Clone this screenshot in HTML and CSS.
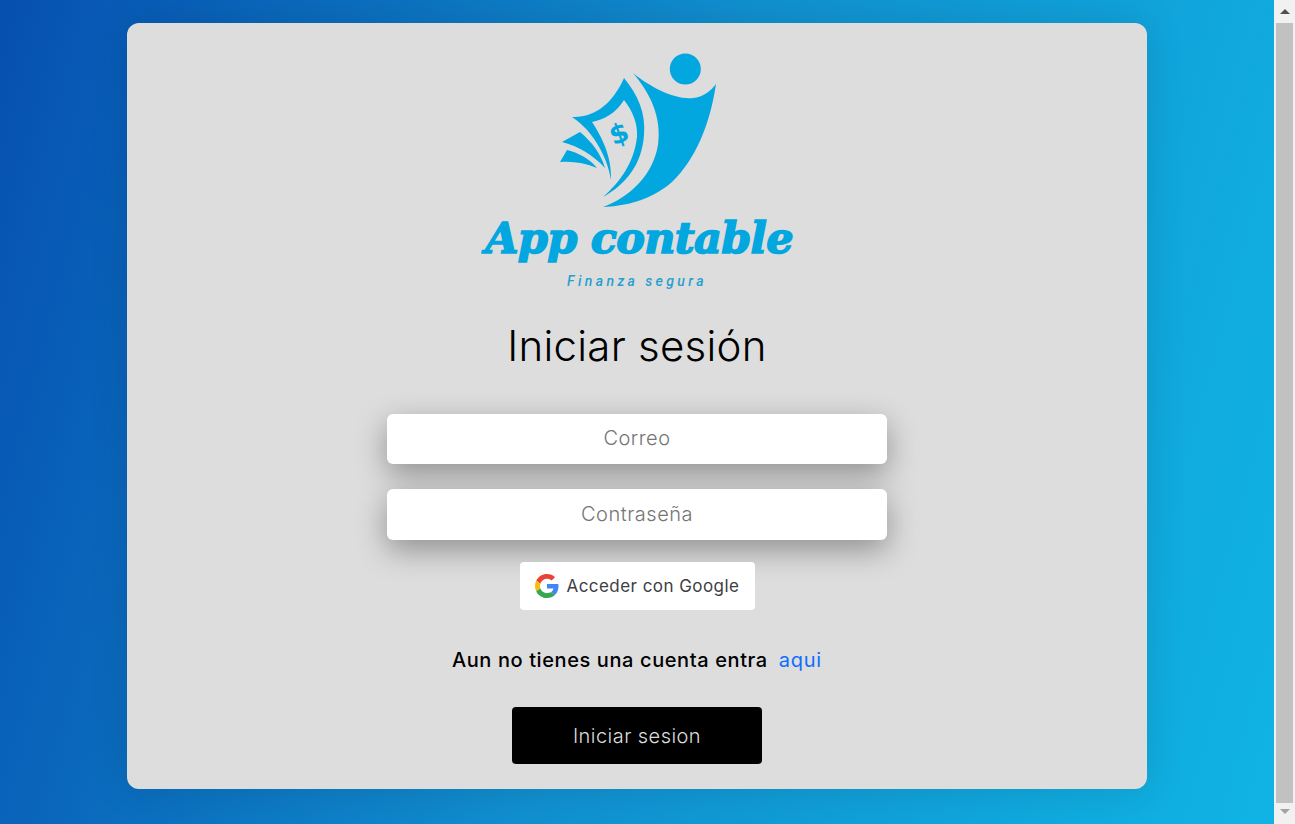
FILE: index.html
```html
<!DOCTYPE html>
<html lang="es">
<head>
    <meta charset="UTF-8">
    <meta name="viewport" content="width=device-width, initial-scale=1.0">
    <title>App contable</title>
    <link rel="stylesheet" href="styles.css">
</head>
<body>
    <div class="page">
        <main class="card">
            <!-- Logo -->
            <div class="logo">
                <svg class="logo-mark" width="180" height="170" viewBox="-3 0 180 170">
                    <circle cx="135.3" cy="24" r="15.5"/>
                    <path d="M83 28C100 42 125 55 143 53C153 52 161 46 166 39C160 80 145 115 122 137C100 156 75 161 53 162C80 152 103 130 108 100C112 72 100 48 83 28Z"/>
                    <path d="M74 33C88 50 96 68 94 90C92 120 75 140 53 152C70 137 84 118 87 92C88 78 82 65 74 55C66 68 55 74 42 77C52 92 62 112 61 135C58 115 45 87 22 72C45 73 63 58 74 33Z"/>
                    <path d="M12 97L30 87C42 97 51 109 55 123C43 110 30 102 12 97Z"/>
                    <path d="M10 117L17 105C29 108 40 114 47 123C35 118 23 116 10 117Z"/>
                    <text class="logo-dollar" x="60" y="98" transform="rotate(-20 69 90)">$</text>
                </svg>
                <div class="logo-name">App contable</div>
                <div class="logo-slogan">Finanza segura</div>
            </div>

            <h1 class="title">Iniciar sesión</h1>

            <!-- Formulario -->
            <form class="login-form">
                <input class="field" type="email" placeholder="Correo">
                <input class="field field-pass" type="password" placeholder="Contraseña">

                <button class="google-btn" type="button">
                    <svg width="24" height="24" viewBox="0 0 48 48">
                        <path fill="#EA4335" d="M24 9.5c3.54 0 6.71 1.22 9.21 3.6l6.85-6.85C35.9 2.38 30.47 0 24 0 14.62 0 6.51 5.38 2.56 13.22l7.98 6.19C12.43 13.72 17.74 9.5 24 9.5z"/>
                        <path fill="#4285F4" d="M46.98 24.55c0-1.57-.15-3.09-.38-4.55H24v9.02h12.94c-.58 2.96-2.26 5.48-4.78 7.18l7.73 6c4.51-4.18 7.09-10.36 7.09-17.65z"/>
                        <path fill="#FBBC05" d="M10.53 28.59c-.48-1.45-.76-2.99-.76-4.59s.27-3.14.76-4.59l-7.98-6.19C.92 16.46 0 20.12 0 24c0 3.88.92 7.54 2.56 10.78l7.97-6.19z"/>
                        <path fill="#34A853" d="M24 48c6.48 0 11.93-2.13 15.89-5.81l-7.73-6c-2.15 1.45-4.92 2.3-8.16 2.3-6.26 0-11.57-4.22-13.47-9.91l-7.98 6.19C6.51 42.62 14.62 48 24 48z"/>
                    </svg>
                    <span>Acceder con Google</span>
                </button>

                <p class="register">Aun no tienes una cuenta entra <a href="#">aqui</a></p>

                <button class="submit-btn" type="submit">Iniciar sesion</button>
            </form>
        </main>
    </div>

    <!-- Barra de desplazamiento -->
    <div class="scrollbar">
        <span class="arrow-up"></span>
        <div class="thumb"></div>
        <span class="arrow-down"></span>
    </div>
</body>
</html>
```

FILE: styles.css
```css
/* Global Styles */
html, body {
    margin: 0;
    height: 824px;
    overflow: hidden;
}

body {
    display: flex;
    font-family: 'Inter', 'Liberation Sans', sans-serif;
    color: #000;
}

.page {
    flex: 1;
    height: 824px;
    background: linear-gradient(105deg, #0650b0 0%, #1190d0 50%, #10b4e4 100%);
    padding-top: 23px;
    box-sizing: border-box;
}

/* Card */
.card {
    width: 1020px;
    height: 766px;
    margin-left: 127px;
    box-sizing: border-box;
    padding-top: 22px;
    background-color: #ddd;
    border-radius: 12px;
    box-shadow: 0 0 40px rgba(0, 0, 0, 0.12);
    display: flex;
    flex-direction: column;
    align-items: center;
}

/* Logo */
.logo {
    height: 236px;
    display: flex;
    flex-direction: column;
    align-items: center;
    color: #03a7df;
}

.logo-mark {
    display: block;
    fill: #03a7df;
    flex: none;
}

.logo-dollar {
    font-family: 'DejaVu Sans', sans-serif;
    font-weight: 700;
    font-size: 27px;
}

.logo-name {
    font-family: 'DejaVu Serif', serif;
    font-weight: 700;
    font-style: italic;
    font-size: 43px;
    line-height: 50px;
    margin: -2px 0 0 4px;
    white-space: nowrap;
    -webkit-text-stroke: 1.6px #03a7df;
    letter-spacing: -0.7px;
}

.logo-slogan {
    font-family: 'Roboto', sans-serif;
    font-style: italic;
    font-weight: 500;
    font-size: 14px;
    line-height: 16px;
    margin-top: 10px;
    letter-spacing: 3.4px;
    color: #2a9fcf;
}

.title {
    margin: 40px 0 0;
    font-size: 42px;
    line-height: 50px;
    font-weight: 300;
    letter-spacing: 0.25px;
}

/* Form */
.login-form {
    margin-top: 43px;
    display: flex;
    flex-direction: column;
    align-items: center;
}

.field {
    display: block;
    width: 500px;
    height: 50px;
    box-sizing: border-box;
    padding: 0 0 2px;
    border: none;
    border-radius: 6px;
    background: #fff;
    font-family: inherit;
    font-size: 20px;
    font-weight: 300;
    letter-spacing: 0.5px;
    text-align: center;
    box-shadow: 0 10px 30px rgba(0, 0, 0, 0.35);
}

.field::placeholder {
    color: #757575;
    opacity: 1;
}

.field-pass {
    height: 51px;
    margin-top: 25px;
}

.google-btn {
    width: 235px;
    height: 48px;
    margin-top: 22px;
    padding: 0 0 0 15px;
    display: flex;
    align-items: center;
    gap: 8px;
    background: #fff;
    border: none;
    border-radius: 4px;
    font-family: 'Inter', sans-serif;
    font-size: 17px;
    font-weight: 400;
    letter-spacing: 0.45px;
    color: #3c4043;
}

.register {
    margin: 37px 0 0;
    font-size: 20px;
    line-height: 26px;
    font-weight: 500;
    letter-spacing: 0.6px;
}

.register a {
    margin-left: 5px;
    color: #0d6efd;
    font-weight: 400;
    letter-spacing: 0.8px;
    text-decoration: none;
}

.submit-btn {
    width: 250px;
    height: 57px;
    margin-top: 34px;
    background: #000;
    color: #ddd;
    border: none;
    border-radius: 4px;
    font-family: inherit;
    font-size: 20px;
    font-weight: 300;
    letter-spacing: 0.45px;
}

/* Scrollbar */
.scrollbar {
    width: 21px;
    height: 824px;
    background: #f1f1f1;
    display: flex;
    flex-direction: column;
    align-items: center;
}

.thumb {
    width: 17px;
    height: 780px;
    margin: 9px 0 6px 0;
    background: #c1c1c1;
}

.arrow-up, .arrow-down {
    width: 0;
    height: 0;
    border-left: 5px solid transparent;
    border-right: 5px solid transparent;
}

.arrow-up {
    margin-top: 9px;
    border-bottom: 5px solid #505050;
}

.arrow-down {
    border-top: 5px solid #a3a3a3;
}
```
